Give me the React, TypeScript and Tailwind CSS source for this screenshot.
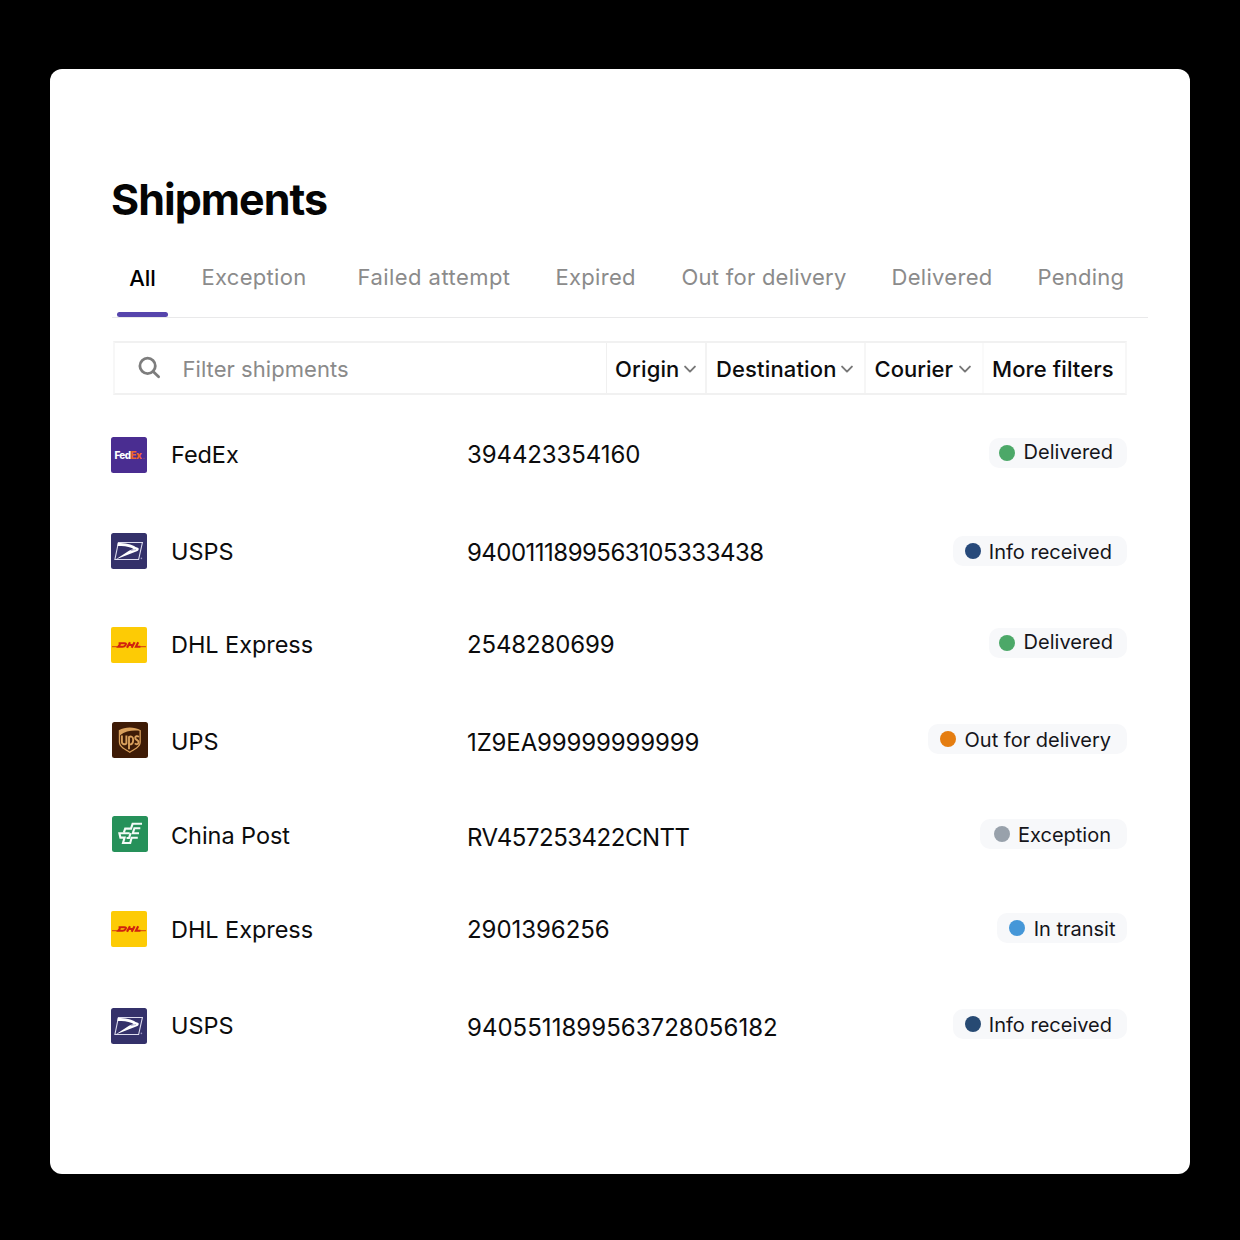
import type { ReactNode } from 'react';

function FedExLogo() {
  return (
    <svg className="h-9 w-9" viewBox="0 0 36 36">
      <rect width="36" height="36" rx="2.5" fill="#4a2d91" />
      <text x="3.4" y="21.8" fontFamily="Inter, sans-serif" fontSize="10" fontWeight="800" letterSpacing="-0.65" fill="#fff">
        Fed<tspan fill="#f0652b">Ex</tspan>
      </text>
      <circle cx="33" cy="21.3" r="0.5" fill="#d0643f" />
    </svg>
  );
}

function UspsLogo() {
  return (
    <svg className="h-9 w-9" viewBox="0 0 36 36">
      <rect width="36" height="36" rx="2.5" fill="#34316a" />
      <path d="M7.4 9.5H31.4L27.6 26.5H3.9Z" fill="none" stroke="#dddcee" strokeWidth="1.1" />
      <path d="M6.8 10C14 10.2 21 11 24.6 14L27.4 15C28.2 16.6 27.4 17.7 25.8 18.2L4.6 26.4L17.6 18C19.4 16.9 21 16.5 22.8 16.3L20.8 14.9C16.4 13.2 12 13.1 6.4 13Z" fill="#fff" />
      <path d="M19.6 17.6L25 16.5" stroke="#8f8db8" strokeWidth="0.7" />
      <circle cx="30.4" cy="25.4" r="0.8" fill="#9a98c2" />
    </svg>
  );
}

function DhlLogo() {
  return (
    <svg className="h-9 w-9" viewBox="0 0 36 36">
      <rect width="36" height="36" rx="2" fill="#fdcb05" />
      <path d="M1 19.6H6.4M29 19.6H35" stroke="#dc5a10" strokeWidth="1.1" />
      <g fill="none" stroke="#d0220f" strokeWidth="2">
        <path d="M7.6 16.2H13.2C15.4 16.2 15.2 17.1 14.6 18C13.9 19.1 13.1 19.8 11.6 19.8H7.2L9.2 17.2" />
        <path d="M19 15.2L16 20.8M23.6 15.2L20.6 20.8M17.5 18H22.4" strokeWidth="2.2" />
        <path d="M27.2 15.2L24.9 19.8H29.4" strokeWidth="2.1" />
      </g>
    </svg>
  );
}

function UpsLogo() {
  return (
    <svg className="h-9 w-9" viewBox="0 0 36 36">
      <rect width="36" height="36" rx="2.5" fill="#3e1b06" />
      <path d="M6.8 8.2C13.5 4.6 22 4.6 28.8 8.2V20C28.8 25.6 22.4 27.8 17.8 31C13.2 27.8 6.8 25.6 6.8 20Z" fill="#d9a05c" />
      <path d="M8.1 13.3C13.3 9 20.5 8 27.5 8.8V20C27.5 24.8 22 26.6 17.8 29.5C13.6 26.6 8.1 24.8 8.1 20Z" fill="#3e1b06" />
      <g fill="none" stroke="#d9a05c" strokeWidth="1.9">
        <path d="M9.9 13.6V19.8C9.9 22.8 13.6 22.8 14.4 21.3V13.6" />
        <path d="M17 27.2V15.1C18.8 13.9 21.2 14.4 21.2 18C21.2 22 18.8 23 17 21.9" />
        <path d="M26.8 14.9C25.1 13.5 23.2 14.3 23.2 15.9C23.2 17.8 26.6 18 26.6 20.2C26.6 22.4 24.3 22.8 22.8 21.4" />
      </g>
    </svg>
  );
}

function ChinaPostLogo() {
  return (
    <svg className="h-9 w-9" viewBox="0 0 36 36">
      <rect width="36" height="36" rx="2.5" fill="#26915a" />
      <g fill="none" stroke="#f4fbf7" strokeWidth="2.1">
        <path d="M30 7.8H20.6L19 12.6H13.2L11.8 16.6" />
        <path d="M28.3 12.2H22.4L20.8 17.2H27" />
        <path d="M17.6 17.2H7.4L8.4 21.6H12.6L11 27H18.2L19.6 21.8H25.8" />
        <path d="M14.6 22H17L18.6 17.2" />
      </g>
    </svg>
  );
}

type Shipment = {
  logo: ReactNode;
  courier: string;
  tracking: string;
  status: string;
  rowClass: string;
  logoClass: string;
  nameClass: string;
  trackingClass: string;
  pillClass: string;
  labelClass: string;
  dotClass: string;
};

const shipments: Shipment[] = [
  { logo: <FedExLogo />, courier: 'FedEx', tracking: '394423354160', status: 'Delivered', rowClass: 'h-24', logoClass: '', nameClass: '', trackingClass: 'tracking-[-0.1px]', pillClass: 'mt-px pl-[10px] pr-[14px]', labelClass: 'ml-[8.5px] -mt-[3px]', dotClass: 'bg-[#4ca868]' },
  { logo: <UspsLogo />, courier: 'USPS', tracking: '9400111899563105333438', status: 'Info received', rowClass: 'h-[94px]', logoClass: '', nameClass: 'mt-px', trackingClass: 'mt-[2px] tracking-[-0.52px]', pillClass: 'mt-[3px] pl-[12px] pr-[15px]', labelClass: 'ml-2 mt-px', dotClass: 'bg-[#27497a]' },
  { logo: <DhlLogo />, courier: 'DHL Express', tracking: '2548280699', status: 'Delivered', rowClass: 'h-[95px]', logoClass: '', nameClass: '', trackingClass: 'tracking-[-0.13px]', pillClass: 'mt-px pl-[10px] pr-[14px]', labelClass: 'ml-[8.5px] -mt-[3px]', dotClass: 'bg-[#4ca868]' },
  { logo: <UpsLogo />, courier: 'UPS', tracking: '1Z9EA99999999999', status: 'Out for delivery', rowClass: 'h-[94px]', logoClass: 'pl-px', nameClass: 'mt-[2px]', trackingClass: 'mt-[3px] tracking-[-0.13px]', pillClass: 'mt-[2px] pl-[12px] pr-[16px]', labelClass: 'ml-[8.5px] mt-px', dotClass: 'bg-[#e57d10]' },
  { logo: <ChinaPostLogo />, courier: 'China Post', tracking: 'RV457253422CNTT', status: 'Exception', rowClass: 'h-[95px]', logoClass: 'pl-px', nameClass: 'mt-[2px]', trackingClass: 'mt-[4px] tracking-[-0.49px]', pillClass: 'mt-[3px] pl-[14px] pr-[16px]', labelClass: 'ml-2 mt-px', dotClass: 'bg-[#98a1ab]' },
  { logo: <DhlLogo />, courier: 'DHL Express', tracking: '2901396256', status: 'In transit', rowClass: 'h-[97px]', logoClass: '', nameClass: 'mt-px', trackingClass: 'mt-px tracking-[-0.05px]', pillClass: 'mt-[2px] pl-[12px] pr-[11.5px]', labelClass: 'ml-[8.5px] mt-px', dotClass: 'bg-[#4597d8]' },
  { logo: <UspsLogo />, courier: 'USPS', tracking: '9405511899563728056182', status: 'Info received', rowClass: 'h-9', logoClass: '', nameClass: '', trackingClass: 'mt-[2px] tracking-[0.03px]', pillClass: 'mt-px pl-[12px] pr-[15px]', labelClass: 'ml-2 mt-px', dotClass: 'bg-[#274a73]' },
];

const tabs = [
  { label: 'Exception', className: 'w-[156px]' },
  { label: 'Failed attempt', className: 'w-[198px] tracking-[0.45px]' },
  { label: 'Expired', className: 'w-[126px]' },
  { label: 'Out for delivery', className: 'w-[210px] tracking-[0.25px]' },
  { label: 'Delivered', className: 'w-[146px]' },
  { label: 'Pending', className: 'tracking-[0.25px]' },
];

function Chevron({ className }: { className: string }) {
  return (
    <svg className={`h-2 w-3 shrink-0 ${className}`} viewBox="0 0 12 8" fill="none" stroke="#777" strokeWidth="1.9" strokeLinecap="round" strokeLinejoin="round">
      <path d="M1.1 1.6L6 6.6L10.9 1.6" />
    </svg>
  );
}

function Tabs() {
  return (
    <nav className="ml-[62px] mt-[34px] flex h-[57px] w-[1036px] border-b border-[#e9e9ea] text-[22px] leading-8 tracking-[0.3px] text-[#8b8b8b]">
      <div className="ml-[5px] mr-[33.5px] flex h-[56px] w-[51px] shrink-0 flex-col items-center justify-between pt-px">
        <span className="font-medium tracking-normal text-black">All</span>
        <span className="h-[5px] w-full rounded-full bg-[#5645ac]" />
      </div>
      {tabs.map((t) => (
        <span key={t.label} className={`shrink-0 whitespace-nowrap ${t.className}`}>{t.label}</span>
      ))}
    </nav>
  );
}

function FilterBar() {
  return (
    <div className="ml-[63px] mt-[23px] flex h-[54px] w-[1014px] border-2 border-x-[#f7f7f7] border-y-[#f1f1f1] text-[22px] font-medium leading-[50px] text-[#0c0c0d]">
      <div className="flex w-[491px] items-center pl-[23px] font-normal text-[#8a8a8a]">
        <svg className="h-6 w-6" viewBox="0 0 24 24" fill="none" stroke="#7d7d7d" strokeWidth="2.8" strokeLinecap="round">
          <circle cx="9.6" cy="9.9" r="7.7" />
          <path d="M15.4 15.7L20.6 20.7" />
        </svg>
        <span className="ml-[20.5px] mt-[2px] tracking-[0.05px]">Filter shipments</span>
      </div>
      <div className="flex w-[99px] items-center border-l border-[#f0f0f0] pl-[8px] tracking-[0.15px]">
        <span className="mt-px">Origin</span><Chevron className="ml-[4.5px] mt-[2px]" />
      </div>
      <div className="flex w-[159px] items-center border-l-2 border-[#f3f3f3] pl-[9px] tracking-[0.15px]">
        <span className="mt-px">Destination</span><Chevron className="ml-[4px] mt-[2px]" />
      </div>
      <div className="flex w-[118px] items-center border-l-2 border-[#f6f6f6] pl-[8.5px]">
        <span className="mt-px">Courier</span><Chevron className="ml-[6.5px] mt-[2px]" />
      </div>
      <div className="flex flex-1 items-center border-l-2 border-[#fafafa] pl-[8px] tracking-[0.1px]">
        <span className="mt-px whitespace-nowrap">More filters</span>
      </div>
    </div>
  );
}

export default function App() {
  return (
    <div className="h-[1240px] w-[1240px] overflow-hidden bg-black pl-[50px] pt-[69px] font-[Inter,sans-serif]">
      <main className="flex h-[1105px] w-[1140px] flex-col rounded-xl bg-white">
        <h1 className="ml-[61px] mt-[102px] h-14 text-[43px] font-[650] leading-[56px] tracking-[-0.98px] text-[#050505]">Shipments</h1>
        <Tabs />
        <FilterBar />
        <div className="ml-[61px] mt-[42px] w-[1016px]">
          {shipments.map((s, i) => (
            <div key={i} className={`flex items-start ${s.rowClass}`}>
              <div className={`w-[60px] shrink-0 ${s.logoClass}`}>{s.logo}</div>
              <span className={`w-[296px] shrink-0 text-[23.5px] leading-9 tracking-[-0.06px] text-[#0c0c0d] ${s.nameClass}`}>{s.courier}</span>
              <span className={`flex-1 text-[24px] leading-9 text-[#0c0c0d] ${s.trackingClass}`}>{s.tracking}</span>
              <div className={`flex h-[30px] items-center rounded-[10px] bg-[#f7f8fa] ${s.pillClass}`}>
                <span className={`h-4 w-4 rounded-full ${s.dotClass}`} />
                <span className={`text-[20px] leading-7 text-[#15151a] ${s.labelClass}`}>{s.status}</span>
              </div>
            </div>
          ))}
        </div>
      </main>
    </div>
  );
}
